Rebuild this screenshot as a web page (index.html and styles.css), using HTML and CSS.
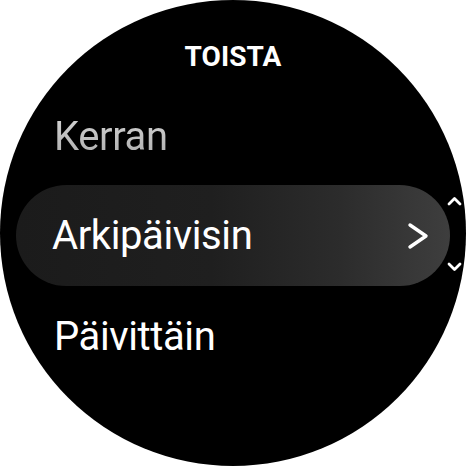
FILE: index.html
```html
<!DOCTYPE html>
<html>
<head>
<meta charset="utf-8">
<link rel="stylesheet" href="styles.css">
</head>
<body>
<div class="watch">
  <div class="title">TOISTA</div>
  <div class="list">
    <div class="item dim">Kerran</div>
    <div class="item selected">
      <span>Arkipäivisin</span>
      <svg class="chev" width="22" height="28" viewBox="0 0 22 28"><path d="M3 3 L19 14 L3 25" fill="none" stroke="#fff" stroke-width="3.4" stroke-linecap="round" stroke-linejoin="round"/></svg>
    </div>
    <div class="item">Päivittäin</div>
  </div>
  <div class="scroll">
    <svg width="15" height="10" viewBox="0 0 15 10"><path d="M2 8 L7.5 2.5 L13 8" fill="none" stroke="#fff" stroke-width="2.8" stroke-linecap="round" stroke-linejoin="round"/></svg>
    <svg width="15" height="10" viewBox="0 0 15 10"><path d="M2 2 L7.5 7.5 L13 2" fill="none" stroke="#fff" stroke-width="2.8" stroke-linecap="round" stroke-linejoin="round"/></svg>
  </div>
</div>
</body>
</html>
```
FILE: styles.css
```css
html, body {
  margin: 0;
  padding: 0;
  background: #fff;
}
.watch {
  position: relative;
  width: 466px;
  height: 466px;
  border-radius: 50%;
  background: #000;
  overflow: hidden;
  display: flex;
  flex-direction: column;
  align-items: center;
  font-family: Roboto, "Noto Sans", sans-serif;
  color: #fff;
}
.title {
  margin-top: 40px;
  font-size: 28px;
  font-weight: 700;
  letter-spacing: 0.1px;
  line-height: 34px;
}
.list {
  margin-top: 39px;
  width: 434px;
  display: flex;
  flex-direction: column;
}
.item {
  height: 100px;
  display: flex;
  align-items: center;
  font-size: 40px;
  letter-spacing: -0.4px;
  padding-left: 38px;
  box-sizing: border-box;
}
.dim {
  height: 60px;
  margin-bottom: 12px;
  color: #bdbdbd;
  align-items: flex-start;
  background: linear-gradient(#d6d6d6, #a0a0a0);
  -webkit-background-clip: text;
  background-clip: text;
  -webkit-text-fill-color: transparent;
}
.selected {
  height: 101px;
  border-radius: 51px;
  padding-left: 36px;
  padding-right: 21px;
  justify-content: space-between;
  background: linear-gradient(90deg, #1b1b1b 0%, #1f1f1f 45%, #2c2c2c 75%, #3e3e3e 100%);
}
.chev {
  display: block;
}
.scroll {
  position: absolute;
  right: 4px;
  top: 196px;
  height: 76px;
  display: flex;
  flex-direction: column;
  justify-content: space-between;
}
.scroll svg {
  display: block;
}
```
